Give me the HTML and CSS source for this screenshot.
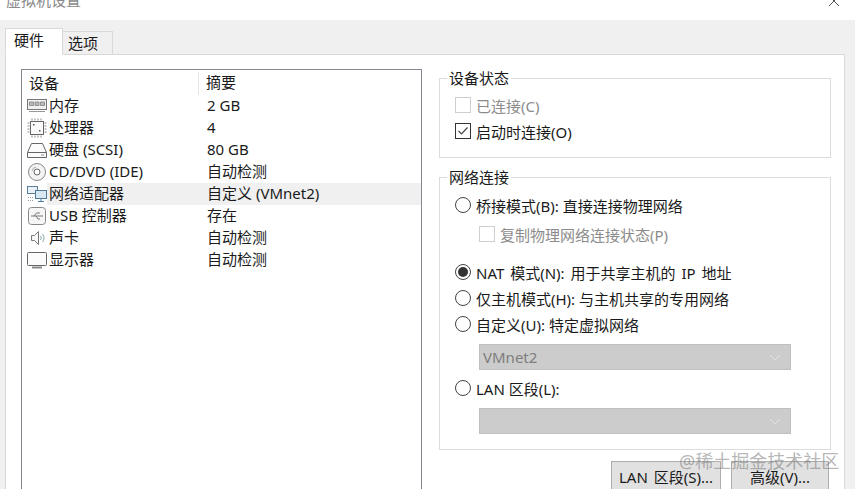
FILE: index.html
```html
<!DOCTYPE html>
<html lang="zh-CN">
<head>
    <meta charset="UTF-8">
    <title>虚拟机设置</title>
    <link rel="stylesheet" href="styles.css">
</head>
<body>
    <div class="titlebar">
        <span class="title">虚拟机设置</span>
        <svg class="close" width="12" height="12" viewBox="0 0 12 12"><path d="M1 0l10 10M11 0L1 10" stroke="#555" fill="none"/></svg>
    </div>
    <div class="window">
        <div class="tabs">
            <div class="tab active">硬件</div>
            <div class="tab">选项</div>
        </div>
        <div class="panel">
            <div class="devices">
                <div class="dev-head">
                    <div class="col-name">设备</div>
                    <div class="col-sum">摘要</div>
                </div>
                <div class="row">
                    <svg class="icon" width="20" height="20" viewBox="0 0 20 20"><rect x=".5" y="3.500" width="19" height="10" fill="#f0f0f0" stroke="#777"/><path d="M2.500 6h4v3.500h-4zM8 6h4v3.500H8zM13.500 6h4v3.500h-4z" fill="#bbb" stroke="#777" stroke-width=".7"/><path d="M2 15.500h16" stroke="#999"/></svg>
                    <div class="row-body"><span class="name">内存</span><span>2 GB</span></div>
                </div>
                <div class="row">
                    <svg class="icon" width="20" height="20" viewBox="0 0 20 20"><rect x="3.500" y="3.500" width="13" height="13" fill="#fafafa" stroke="#666"/><path d="M5 .5v2M8 .5v2M11 .5v2M14 .5v2M5 17.500v2M8 17.500v2M11 17.500v2M14 17.500v2M.5 5h2M.5 8h2M.5 11h2M.5 14h2M17.500 5h2M17.500 8h2M17.500 11h2M17.500 14h2" stroke="#888"/><path d="M6 6h1.500v1.500H6zM12 12h1.500v1.500H12z" fill="#555"/></svg>
                    <div class="row-body"><span class="name">处理器</span><span>4</span></div>
                </div>
                <div class="row">
                    <svg class="icon" width="20" height="20" viewBox="0 0 20 20"><path d="M4.500 3.500h11l4 9v5H.5v-5z" fill="#fcfcfc" stroke="#666"/><path d="M.5 12.500h19" stroke="#666"/><path d="M14 15h3" stroke="#888"/></svg>
                    <div class="row-body"><span class="name">硬盘 (SCSI)</span><span>80 GB</span></div>
                </div>
                <div class="row">
                    <svg class="icon" width="20" height="20" viewBox="0 0 20 20"><circle cx="10" cy="10" r="8.500" fill="#f4f4f4" stroke="#888"/><circle cx="10" cy="10" r="3" fill="#fff" stroke="#666"/><path d="M5 9a5 5 0 0 1 4-4" stroke="#aaa" fill="none"/></svg>
                    <div class="row-body"><span class="name">CD/DVD (IDE)</span><span>自动检测</span></div>
                </div>
                <div class="row selected">
                    <svg class="icon" width="20" height="20" viewBox="0 0 20 20"><rect x=".5" y="2.500" width="10" height="7" fill="#eaf2f8" stroke="#5b7f99"/><rect x="8.500" y="6.500" width="11" height="8" fill="#d8e8f2" stroke="#4f7c9c"/><path d="M14 14.500v2.500M11 17.500h6" stroke="#4f7c9c"/><path d="M1 13.500h6M1 16.500h6" stroke="#999" stroke-dasharray="1 1"/></svg>
                    <div class="row-body"><span class="name">网络适配器</span><span>自定义 (VMnet2)</span></div>
                </div>
                <div class="row">
                    <svg class="icon" width="20" height="20" viewBox="0 0 20 20"><rect x="1.500" y="1.500" width="17" height="17" rx="3" fill="#f6f6f6" stroke="#888"/><path d="M4 10h12M7 10l2.500-3H13M9 10l2 3h2" stroke="#777" fill="none"/></svg>
                    <div class="row-body"><span class="name">USB 控制器</span><span>存在</span></div>
                </div>
                <div class="row">
                    <svg class="icon" width="20" height="20" viewBox="0 0 20 20"><path d="M4.500 7.500h3l4-4v13l-4-4h-3z" fill="#f8f8f8" stroke="#777"/><path d="M13.500 8a3 3 0 0 1 0 4M15.500 6a6 6 0 0 1 0 8" stroke="#8aa" fill="none"/></svg>
                    <div class="row-body"><span class="name">声卡</span><span>自动检测</span></div>
                </div>
                <div class="row">
                    <svg class="icon" width="20" height="20" viewBox="0 0 20 20"><rect x=".5" y="2.500" width="19" height="13" rx="1" fill="#fbfbfb" stroke="#666"/><path d="M5 17.500h10" stroke="#888" stroke-width="2"/></svg>
                    <div class="row-body"><span class="name">显示器</span><span>自动检测</span></div>
                </div>
            </div>
            <div class="side">
                <fieldset class="group group-state">
                    <legend>设备状态</legend>
                    <div class="opt disabled"><span class="check"></span>已连接(C)</div>
                    <div class="opt"><span class="check on"><svg width="14" height="14" viewBox="0 0 14 14"><path d="M2.500 7l3 3 6-6.500" stroke="#444" stroke-width="1.200" fill="none"/></svg></span>启动时连接(O)</div>
                </fieldset>
                <fieldset class="group group-net">
                    <legend>网络连接</legend>
                    <div class="opt"><span class="radio"></span>桥接模式(B): 直接连接物理网络</div>
                    <div class="opt sub disabled"><span class="check"></span>复制物理网络连接状态(P)</div>
                    <div class="opt nat"><span class="radio on"></span><span class="wide">NAT 模式(N): 用于共享主机的 IP 地址</span></div>
                    <div class="opt"><span class="radio"></span>仅主机模式(H): 与主机共享的专用网络</div>
                    <div class="opt"><span class="radio"></span>自定义(U): 特定虚拟网络</div>
                    <div class="select">VMnet2<svg width="12" height="7" viewBox="0 0 12 7"><path d="M1 1l5 5 5-5" stroke="#e4e4e4" fill="none"/></svg></div>
                    <div class="opt after-select"><span class="radio"></span>LAN 区段(L):</div>
                    <div class="select"><svg width="12" height="7" viewBox="0 0 12 7"><path d="M1 1l5 5 5-5" stroke="#e4e4e4" fill="none"/></svg></div>
                </fieldset>
                <div class="buttons">
                    <button class="btn btn-lan"><span class="wide">LAN 区段(S)...</span></button>
                    <button class="btn btn-adv">高级(V)...</button>
                </div>
            </div>
        </div>
    </div>
    <div class="watermark">@稀土掘金技术社区</div>
</body>
</html>
```

FILE: styles.css
```css
html, body {
    margin: 0;
    height: 489px;
    overflow: hidden;
}
body {
    position: relative;
    background: #f0f0f0;
    color: #1a1a1a;
    font-family: "Noto Sans", "Noto Sans CJK SC", sans-serif;
    font-size: 15px;
}
.titlebar {
    height: 20px;
    background: #fff;
    display: flex;
    justify-content: space-between;
    overflow: hidden;
}
.title {
    margin: -10px 0 0 6px;
    line-height: 20px;
    color: #8a8a8a;
}
.close {
    margin: -4px 15px 0 0;
}
.window {
    padding: 10px 10px 0 5px;
}
.tabs {
    display: flex;
    align-items: flex-end;
    height: 25px;
    position: relative;
    z-index: 1;
    margin-bottom: -1px;
}
.tab {
    width: 44px;
    height: 22px;
    padding-left: 5px;
    line-height: 22px;
    background: #f0f0f0;
    border: 1px solid #d9d9d9;
    border-left: 0;
}
.tab.active {
    width: 48px;
    height: 25px;
    padding-left: 8px;
    line-height: 23px;
    background: #fff;
    border-left: 1px solid #d9d9d9;
    border-bottom: 1px solid #fff;
}
.panel {
    display: grid;
    grid-template-columns: 401px 392px;
    column-gap: 17px;
    align-items: start;
    height: 440px;
    padding: 14px 13px 0 15px;
    background: #fff;
    border: 1px solid #d9d9d9;
}
.devices {
    height: 440px;
    border: 1px solid #828790;
    box-sizing: border-box;
}
.dev-head {
    display: flex;
    height: 25px;
}
.col-name {
    width: 169px;
    padding-left: 7px;
    border-right: 1px solid #e5e5e5;
    margin-top: 2px;
    line-height: 22px;
}
.col-sum {
    padding-left: 7px;
    line-height: 24px;
}
.row {
    display: flex;
    height: 22px;
    padding-left: 5px;
    line-height: 21px;
}
.icon {
    flex: none;
    margin-top: 1px;
}
.row-body {
    flex: 1;
    display: flex;
    padding-left: 2px;
}
.selected .row-body {
    background: #f0f0f0;
}
.name {
    width: 158px;
}
.side {
    margin-top: -1px;
}
.group {
    margin: 0;
    padding: 5px 0 0 15px;
    border: 1px solid #dcdcdc;
    min-width: 0;
}
.group legend {
    margin-left: -8px;
    padding: 0 2px;
    height: 20px;
    line-height: 20px;
}
.group-state {
    padding-top: 4px;
    padding-bottom: 13px;
}
.group-net {
    margin-top: 9px;
    padding-bottom: 15px;
}
.opt {
    display: flex;
    align-items: center;
    height: 26px;
}
.wide {
    word-spacing: 2px;
}
.disabled {
    color: #8c8c8c;
}
.sub {
    margin: 3px 0 0 24px;
}
.nat {
    margin-top: 12px;
}
.after-select {
    margin-top: 5px;
}
.check, .radio {
    flex: none;
    width: 14px;
    height: 14px;
    margin-right: 5px;
    border: 1px solid #333;
    display: flex;
    align-items: center;
    justify-content: center;
}
.disabled .check {
    border-color: #cfcfcf;
}
.radio {
    border-radius: 50%;
    border-color: #444;
}
.radio.on::after {
    content: "";
    width: 10px;
    height: 10px;
    border-radius: 50%;
    background: #333;
}
.select {
    display: flex;
    align-items: center;
    height: 24px;
    width: 298px;
    margin: 7px 0 0 24px;
    padding: 0 9px 0 3px;
    background: #cccccc;
    border: 1px solid #bfbfbf;
    color: #7d7d7d;
}
.select svg {
    margin-left: auto;
}
.buttons {
    display: flex;
    justify-content: flex-end;
    gap: 10px;
    margin-top: 11px;
    padding-right: 2px;
}
.btn {
    height: 34px;
    padding: 0 0 4px;
    background: #e1e1e1;
    border: 1px solid #adadad;
    color: #1a1a1a;
    font: inherit;
}
.btn-lan {
    width: 110px;
}
.btn-adv {
    width: 98px;
}
.watermark {
    position: absolute;
    left: 679px;
    top: 449px;
    font-size: 18px;
    line-height: 24px;
    color: rgba(120, 120, 120, 0.55);
}
```
